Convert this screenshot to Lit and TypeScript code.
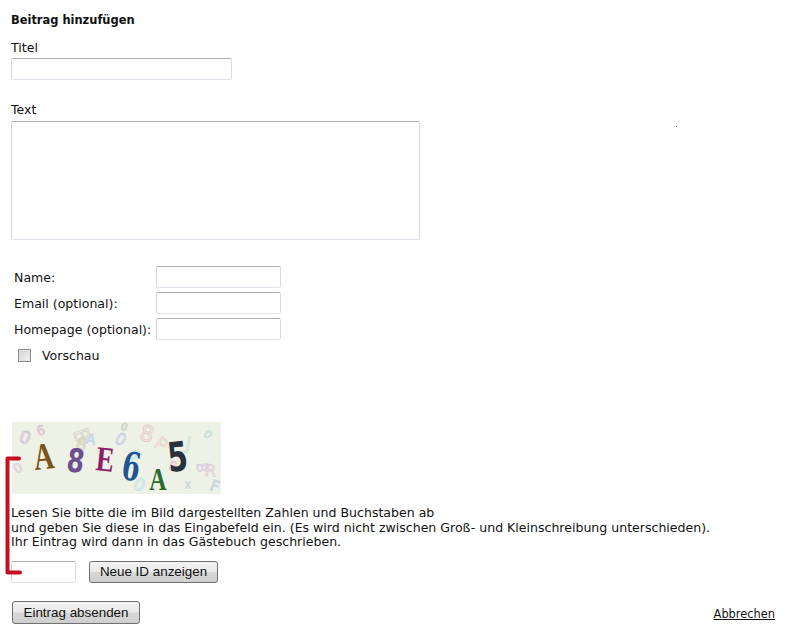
import { LitElement, html, css, svg } from "lit";
import { customElement } from "lit/decorators.js";

const noise: [string, number, number, number, number, string][] = [
  ["0", 11, 21, 17, 20, "#d0c2d6"],
  ["6", 30, 13, 13, -15, "#dfc4d0"],
  ["B", 63, 16, 21, 70, "#d8d2c8"],
  ["8", 68, 28, 17, 15, "#d6d0c2"],
  ["A", 78, 22, 14, 10, "#c4d8e6"],
  ["0", 106, 22, 16, 30, "#c6cee2"],
  ["0", 111, 8, 10, 20, "#d0d4cc"],
  ["8", 133, 19, 22, 15, "#e4ccc6"],
  ["P", 145, 27, 18, 40, "#e8d4d0"],
  ["J", 175, 28, 18, 10, "#c8e2d8"],
  ["0", 193, 15, 11, 50, "#c8e0d8"],
  ["0", 8, 50, 13, -30, "#e2d2da"],
  ["B", 185, 46, 14, 85, "#d8d2e2"],
  ["R", 198, 54, 16, 5, "#e2ccd6"],
  ["F", 201, 69, 15, 20, "#c2d2dc"],
  ["0", 125, 68, 17, 25, "#c8e2e6"],
  ["6", 118, 36, 14, 50, "#c2eaea"],
  ["x", 176, 66, 10, 0, "#ccdcd8"],
  ["P", 160, 48, 12, 10, "#e6ccd6"],
];
const letters: [string, number, number, number, number, number, number, string, string][] = [
  ["A", 33, 47, 28, -6, 1, 1.35, "#7a5518", "Liberation Serif"],
  ["8", 62, 50, 25, 8, 1, 1.3, "#6f4f8f", "DejaVu Sans"],
  ["E", 92, 49, 27, 6, 1, 1.3, "#8c1f6b", "Liberation Serif"],
  ["6", 117, 58, 26, 10, 1, 1.5, "#1f5590", "DejaVu Serif"],
  ["A", 146, 68, 24, 0, 1, 1.35, "#2a6a2e", "Liberation Serif"],
  ["5", 167, 49, 29, -6, 1, 1.4, "#27323c", "DejaVu Sans"],
];

@customElement("app-root")
export class AppRoot extends LitElement {
  static styles = css`
    :host {
      display: block;
      position: relative;
      width: 795px;
      height: 627px;
      box-sizing: border-box;
      padding: 13px 20px 0 11px;
      background: #fff;
      color: #111;
      font: 12.55px/15px "DejaVu Sans", Verdana, sans-serif;
      overflow: hidden;
    }
    .head { font-size: 11.45px; font-weight: 700; line-height: 15px; margin-bottom: 12px; }
    .lbl { height: 15px; line-height: 15px; margin-bottom: 3px; }
    .lbl.text { margin-bottom: 4px; }
    input[type="text"], textarea {
      display: block;
      box-sizing: border-box;
      padding: 0;
      background: #fff;
      border: 1px solid #dfe3ea;
      border-top-color: #adadad;
      border-left-color: #d4d6da;
      border-right-color: #d8dce2;
      border-radius: 2px;
      outline: none;
      resize: none;
    }
    input.title-in { width: 221px; height: 22px; margin: 0 0 22px; }
    textarea.text-in { width: 409px; height: 119px; margin: 0; }
    .form {
      display: grid;
      grid-template-columns: 142px 125px;
      grid-auto-rows: 22px;
      row-gap: 4px;
      align-items: center;
      margin: 26px 0 0 3px;
      white-space: nowrap;
    }
    .form input { width: 125px; height: 22px; margin: 0; }
    .preview { display: flex; align-items: center; margin: 8px 0 0 7px; height: 15px; }
    .box {
      width: 13px;
      height: 13px;
      box-sizing: border-box;
      border: 1px solid #8c8c8c;
      background: linear-gradient(135deg, #d0d0d0, #f4f4f4);
      box-shadow: inset 0 0 0 1px #e2e2e2;
      margin-right: 11px;
    }
    .captcha { display: block; width: 209px; height: 72px; margin: 59px 0 0 1px; }
    .help { margin: 12px 0 0; line-height: 14.5px; white-space: nowrap; }
    .id-row { display: flex; gap: 13px; margin-top: 11px; }
    input.id-in { width: 65px; height: 22px; margin: 0; }
    button {
      box-sizing: border-box;
      height: 22px;
      padding: 0;
      border: 1px solid #707070;
      border-radius: 3px;
      background: linear-gradient(#f3f3f3 0%, #e9e9e9 48%, #d8d8d8 52%, #cfcfcf 100%);
      color: #111;
      font: 13.4px "Liberation Sans", Arial, sans-serif;
    }
    .new-id { width: 129px; }
    .foot { display: flex; justify-content: space-between; align-items: flex-end; margin-top: 18px; }
    .send { width: 128px; height: 23px; margin-left: 1px; }
    a { color: #111; font-size: 11.4px; line-height: 14px; text-decoration: underline; margin-bottom: 3px; }
    .bracket { position: absolute; left: 4px; top: 456px; width: 20px; height: 120px; pointer-events: none; }
    .dot { position: absolute; left: 676px; top: 126px; width: 1px; height: 1px; background: #c03040; }
  `;

  render() {
    return html`
      <div class="head">Beitrag hinzufügen</div>
      <div class="lbl">Titel</div>
      <input class="title-in" type="text" />
      <div class="lbl text">Text</div>
      <textarea class="text-in"></textarea>
      <div class="form">
        <span>Name:</span><input type="text" />
        <span>Email (optional):</span><input type="text" />
        <span>Homepage (optional):</span><input type="text" />
      </div>
      <div class="preview"><span class="box"></span><span>Vorschau</span></div>
      <svg class="captcha" viewBox="0 0 209 72" role="img" aria-label="Captcha">
        <rect width="209" height="72" fill="#eef1e6" />
        ${noise.map(
          ([c, x, y, s, r, f]) => svg`<text x=${x} y=${y} font-size=${s} fill="none" stroke=${f} stroke-width="0.9"
            font-family="DejaVu Sans" text-anchor="middle" transform="rotate(${r} ${x} ${y})">${c}</text>`
        )}
        ${letters.map(
          ([c, x, y, s, r, sx, sy, f, fam]) => svg`<text font-size=${s} fill=${f}
            font-family=${fam} font-weight="700" text-anchor="middle"
            transform="translate(${x} ${y}) rotate(${r}) scale(${sx} ${sy})">${c}</text>`
        )}
      </svg>
      <p class="help">
        Lesen Sie bitte die im Bild dargestellten Zahlen und Buchstaben ab<br />
        und geben Sie diese in das Eingabefeld ein. (Es wird nicht zwischen Groß- und Kleinschreibung unterschieden).<br />
        Ihr Eintrag wird dann in das Gästebuch geschrieben.
      </p>
      <div class="id-row">
        <input class="id-in" type="text" />
        <button class="new-id">Neue ID anzeigen</button>
      </div>
      <div class="foot">
        <button class="send">Eintrag absenden</button>
        <a href="#">Abbrechen</a>
      </div>
      <svg class="bracket" viewBox="0 0 20 120" fill="none">
        <path d="M15 2.5H3.5V116.5H16" stroke="#c4101f" stroke-width="4" stroke-linejoin="round" stroke-linecap="round" />
      </svg>
      <span class="dot"></span>
    `;
  }
}
